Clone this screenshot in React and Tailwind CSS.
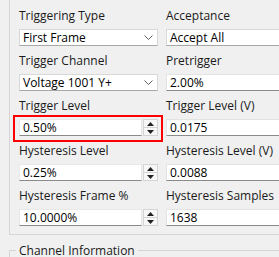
import React from "react";

function Chevron() {
  return (
    <svg width="9" height="5" viewBox="0 0 9 5" className="shrink-0">
      <path d="M0.5 0.5 L4.5 4.5 L8.5 0.5" fill="none" stroke="#606060" strokeWidth="1" />
    </svg>
  );
}

function Combo({ value }) {
  return (
    <div className="h-[17px] bg-white border border-[#d9d9d9] border-b-[#a8a8a8] flex items-center pl-[3px] pr-[4px] text-black">
      <span className="flex-1 leading-none whitespace-nowrap">{value}</span>
      <Chevron />
    </div>
  );
}

function LineEdit({ value }) {
  return (
    <div className="h-[17px] bg-white border border-[#e3e3e3] border-b-[#8a8a8a] flex items-center pl-[3px] text-black">
      <span className="leading-none whitespace-nowrap">{value}</span>
    </div>
  );
}

function Spin({ value }) {
  return (
    <div className="h-[17px] flex">
      <div className="flex-1 bg-white border border-[#e8e8e8] border-b-[#8a8a8a] flex items-center pl-[3px] text-black">
        <span className="leading-none whitespace-nowrap">{value}</span>
      </div>
      <div className="w-[15px] ml-[1px] flex flex-col border border-[#d4d4d4] bg-[#f7f7f7]">
        <div className="flex-1 flex items-center justify-center border-b border-[#d4d4d4]">
          <svg width="7" height="4" viewBox="0 0 7 4"><path d="M3.5 0 L7 4 L0 4 Z" fill="#202020" /></svg>
        </div>
        <div className="flex-1 flex items-center justify-center">
          <svg width="7" height="4" viewBox="0 0 7 4"><path d="M0 0 L7 0 L3.5 4 Z" fill="#202020" /></svg>
        </div>
      </div>
    </div>
  );
}

function Cell({ label, children }) {
  return (
    <div className="h-[45px] flex flex-col">
      <div className="h-[16px] leading-[16px] whitespace-nowrap text-[#1a1a1a]">{label}</div>
      <div className="mt-[5px]">{children}</div>
    </div>
  );
}

export default function App() {
  return (
    <div
      className="w-[279px] h-[257px] bg-[#f0f0f0] overflow-hidden relative text-[12px]"
      style={{ fontFamily: '"Open Sans", "Noto Sans", sans-serif' }}
    >
      <div className="ml-[9px] h-[235px] border-l border-b border-[#d5d5d5] pl-[9px] pt-[8px]">
        <div className="grid grid-cols-[139px_139px] gap-x-[8px]">
          <Cell label="Triggering Type"><Combo value="First Frame" /></Cell>
          <Cell label="Acceptance"><Combo value="Accept All" /></Cell>
          <Cell label="Trigger Channel"><Combo value="Voltage 1001 Y+" /></Cell>
          <Cell label="Pretrigger"><LineEdit value="2.00%" /></Cell>
          <Cell label="Trigger Level"><Spin value="0.50%" /></Cell>
          <Cell label="Trigger Level (V)"><LineEdit value="0.0175" /></Cell>
          <Cell label="Hysteresis Level"><Spin value="0.25%" /></Cell>
          <Cell label="Hysteresis Level (V)"><LineEdit value="0.0088" /></Cell>
          <Cell label="Hysteresis Frame %"><Spin value="10.0000%" /></Cell>
          <Cell label="Hysteresis Samples"><LineEdit value="1638" /></Cell>
        </div>
      </div>
      <fieldset className="ml-[9px] mt-[9px] border-l border-t border-[#d5d5d5] h-[40px] pl-[6px] min-w-0">
        <legend className="px-[3px] leading-[13px] text-[#1a1a1a] whitespace-nowrap">Channel Information</legend>
      </fieldset>
      <div className="absolute left-[13px] top-[115px] w-[150px] h-[27px] border-2 border-[#ff0000] pointer-events-none" />
    </div>
  );
}
